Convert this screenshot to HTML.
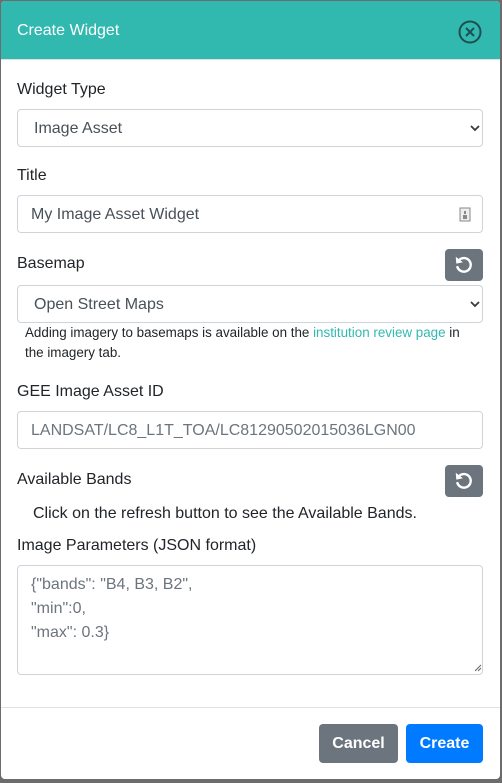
<!DOCTYPE html>
<html><head><style>
*{box-sizing:border-box;margin:0;padding:0}
body{width:502px;height:783px;background:#6c6c6c;font-family:"Liberation Sans",sans-serif;position:relative;overflow:hidden}
.modal{position:absolute;left:1px;top:1px;width:499px;height:778px;background:#fff;border-radius:4px;overflow:hidden}
.hdr{position:absolute;left:0;top:0;width:100%;height:59px;background:#31b9b0;border-bottom:1px solid #dee2e6}
.a{position:absolute}
.lbl{font-size:16px;color:#212529;left:16px}
.box{left:16px;width:466px;height:38px;border:1px solid #ced4da;border-radius:4px;background:#fff;font-size:16px;color:#495057;line-height:37px}
.rb{left:444px;width:38px;height:32px;background:#6c757d;border-radius:4px}
.btn{height:39px;border-radius:4px;color:#fff;font-weight:bold;font-size:16px;line-height:40px;text-align:center;top:723px}
</style></head><body>
<div class="modal">
<div class="hdr"></div>
<div class="a" style="left:16px;top:21px;font-size:16px;color:#fff">Create Widget</div>
<svg class="a" style="left:457px;top:19px" width="24" height="24" viewBox="0 0 24 24"><circle cx="12" cy="12" r="10.5" fill="none" stroke="#1e4f4c" stroke-width="2"/><path d="M8 8L16 16M16 8L8 16" stroke="#1e4f4c" stroke-width="2"/></svg>

<div class="a lbl" style="top:80px">Widget Type</div>
<div class="a box" style="top:108px;padding-left:16px">Image Asset</div>
<svg class="a" style="left:469px;top:123px" width="10" height="8"><path d="M1 2L5 6L9 2" fill="none" stroke="#343a40" stroke-width="1.8"/></svg>

<div class="a lbl" style="top:166px">Title</div>
<div class="a box" style="top:194px;padding-left:13px">My Image Asset Widget</div>
<svg class="a" style="left:458px;top:206px" width="12" height="15"><rect x="1" y="1" width="10" height="13" fill="#eee" stroke="#888"/><rect x="4" y="8" width="4" height="4" fill="#888"/><rect x="5" y="4" width="2" height="3" fill="#888"/></svg>

<div class="a lbl" style="top:254px">Basemap</div>
<div class="a rb" style="top:248px"></div>
<svg class="a" style="left:452px;top:253px" width="22" height="22" viewBox="0 0 20 20"><path d="M5.5 5.5A6.2 6.2 0 1 1 3.8 11" fill="none" stroke="#fff" stroke-width="2.2"/><path d="M2.5 2.5L3 8.8L9 7.5Z" fill="#fff"/></svg>
<div class="a box" style="top:284px;padding-left:16px">Open Street Maps</div>
<svg class="a" style="left:469px;top:299px" width="10" height="8"><path d="M1 2L5 6L9 2" fill="none" stroke="#343a40" stroke-width="1.8"/></svg>
<div class="a" style="left:24px;top:322px;width:450px;font-size:13.4px;line-height:20px;color:#212529">Adding imagery to basemaps is available on the <span style="color:#31b9b0">institution review page</span> in the imagery tab.</div>

<div class="a lbl" style="top:382px">GEE Image Asset ID</div>
<div class="a box" style="top:410px;padding-left:13px;color:#6c757d">LANDSAT/LC8_L1T_TOA/LC81290502015036LGN00</div>

<div class="a lbl" style="top:470px">Available Bands</div>
<div class="a rb" style="top:464px"></div>
<svg class="a" style="left:452px;top:469px" width="22" height="22" viewBox="0 0 20 20"><path d="M5.5 5.5A6.2 6.2 0 1 1 3.8 11" fill="none" stroke="#fff" stroke-width="2.2"/><path d="M2.5 2.5L3 8.8L9 7.5Z" fill="#fff"/></svg>
<div class="a" style="left:32px;top:504px;font-size:16px;color:#212529">Click on the refresh button to see the Available Bands.</div>

<div class="a lbl" style="top:536px">Image Parameters (JSON format)</div>
<div class="a box" style="top:564px;height:110px;padding:7px 0 0 13px;line-height:24px;color:#6c757d">{"bands": "B4, B3, B2",<br>"min":0,<br>"max": 0.3}</div>
<svg class="a" style="left:473px;top:663px" width="8" height="8"><path d="M1 7L7 1M4 7L7 4" stroke="#666" stroke-width="1"/></svg>

<div class="a" style="left:0;top:706px;width:100%;height:1px;background:#dee2e6"></div>
<div class="a btn" style="left:318px;width:79px;background:#6c757d">Cancel</div>
<div class="a btn" style="left:405px;width:77px;background:#007bff">Create</div>
</div>
</body></html>
